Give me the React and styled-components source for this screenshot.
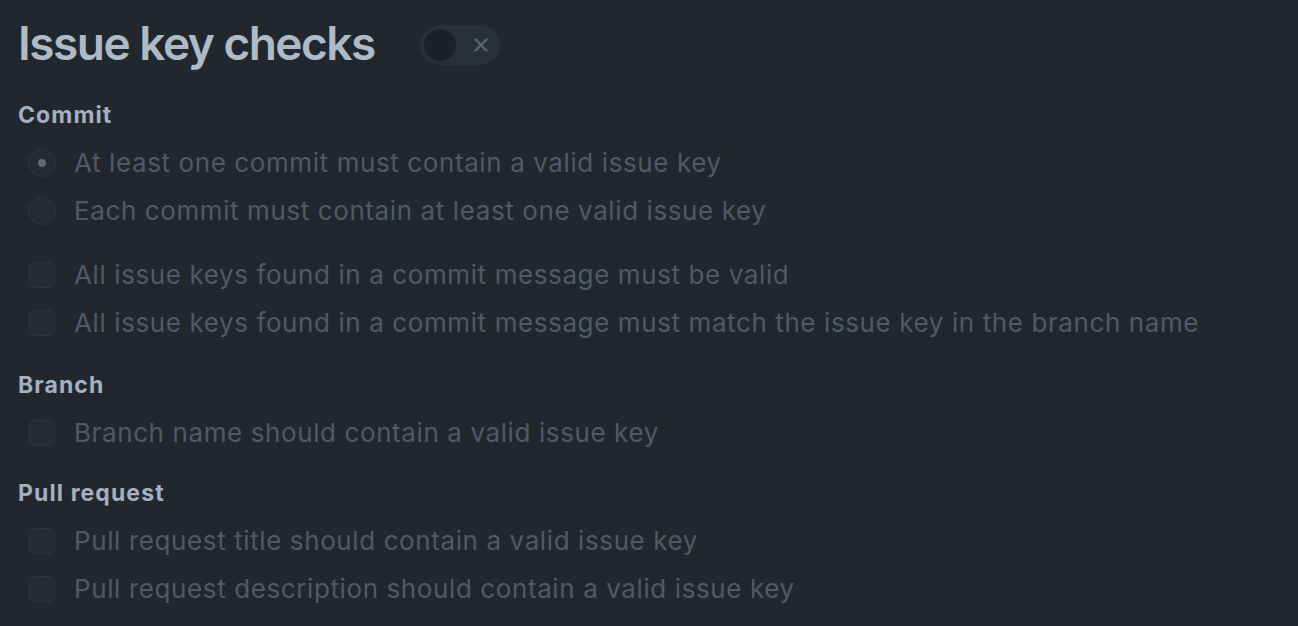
import React from "react";
import styled, { createGlobalStyle } from "styled-components";

const Global = createGlobalStyle`
  html, body { margin: 0; padding: 0; background: #22272e; }
  body { font-family: Inter, "Noto Sans", "Liberation Sans", sans-serif; -webkit-font-smoothing: antialiased; }
  * { box-sizing: border-box; }
`;

const Page = styled.main`
  padding: 16px 18px 0 18px;
  display: flex;
  flex-direction: column;
`;

const Header = styled.div`
  display: flex;
  align-items: center;
  gap: 45px;
`;

const Title = styled.h1`
  margin: 0;
  font-size: 46px;
  line-height: 55px;
  font-weight: 600;
  color: #adbac7;
  letter-spacing: -1.5px;
`;

const Toggle = styled.button`
  width: 80px;
  height: 40px;
  border-radius: 20px;
  border: none;
  padding: 0 0 0 4px;
  margin-top: 3px;
  background: #2a3038;
  display: flex;
  align-items: center;
  gap: 18px;
  cursor: not-allowed;
`;

const Knob = styled.span`
  width: 32px;
  height: 32px;
  border-radius: 50%;
  background: #1c2127;
`;

const Section = styled.section`
  display: flex;
  flex-direction: column;
  margin-top: ${(p) => p.$top}px;
`;

const Heading = styled.h4`
  margin: 0 0 10px 0;
  font-size: 23px;
  line-height: 28px;
  font-weight: 700;
  letter-spacing: 1.1px;
  color: #a3b1c1;
`;

const Group = styled.div`
  display: flex;
  flex-direction: column;
  & + & { margin-top: 16px; }
`;

const Row = styled.label`
  display: flex;
  align-items: center;
  height: 48px;
  padding-left: 10px;
  gap: 18px;
`;

const ControlBox = styled.span`
  width: 28px;
  height: 28px;
  display: flex;
  align-items: center;
  justify-content: center;
  flex: none;
`;

const Radio = styled.span`
  width: 28px;
  height: 28px;
  border-radius: 50%;
  background: #262b32;
  border: 1.5px solid #2f353d;
  display: flex;
  align-items: center;
  justify-content: center;
  &::after {
    content: "";
    width: 8px;
    height: 8px;
    border-radius: 50%;
    background: ${(p) => (p.$checked ? "#5f6b78" : "transparent")};
  }
`;

const Checkbox = styled.span`
  width: 26px;
  height: 26px;
  border-radius: 5px;
  background: #272c33;
  border: 1.5px solid #2e343b;
`;

const Label = styled.span`
  font-size: 26px;
  line-height: 48px;
  letter-spacing: 0.6px;
  color: #4f5a66;
  white-space: nowrap;
`;

const Option = ({ type, checked, children }) => (
  <Row>
    <ControlBox>
      {type === "radio" ? <Radio $checked={checked} /> : <Checkbox />}
    </ControlBox>
    <Label>{children}</Label>
  </Row>
);

export default function App() {
  return (
    <>
      <Global />
      <Page>
        <Header>
          <Title>Issue key checks</Title>
          <Toggle aria-label="toggle">
            <Knob />
            <svg width="14" height="14" viewBox="0 0 14 14">
              <path d="M1.5 1.5 L12.5 12.5 M12.5 1.5 L1.5 12.5" stroke="#5a6572" strokeWidth="2.4" strokeLinecap="round" />
            </svg>
          </Toggle>
        </Header>

        <Section $top={30}>
          <Heading>Commit</Heading>
          <Group>
            <Option type="radio" checked>At least one commit must contain a valid issue key</Option>
            <Option type="radio">Each commit must contain at least one valid issue key</Option>
          </Group>
          <Group>
            <Option>All issue keys found in a commit message must be valid</Option>
            <Option>All issue keys found in a commit message must match the issue key in the branch name</Option>
          </Group>
        </Section>

        <Section $top={24}>
          <Heading>Branch</Heading>
          <Group>
            <Option>Branch name should contain a valid issue key</Option>
          </Group>
        </Section>

        <Section $top={22}>
          <Heading>Pull request</Heading>
          <Group>
            <Option>Pull request title should contain a valid issue key</Option>
            <Option>Pull request description should contain a valid issue key</Option>
          </Group>
        </Section>
      </Page>
    </>
  );
}
